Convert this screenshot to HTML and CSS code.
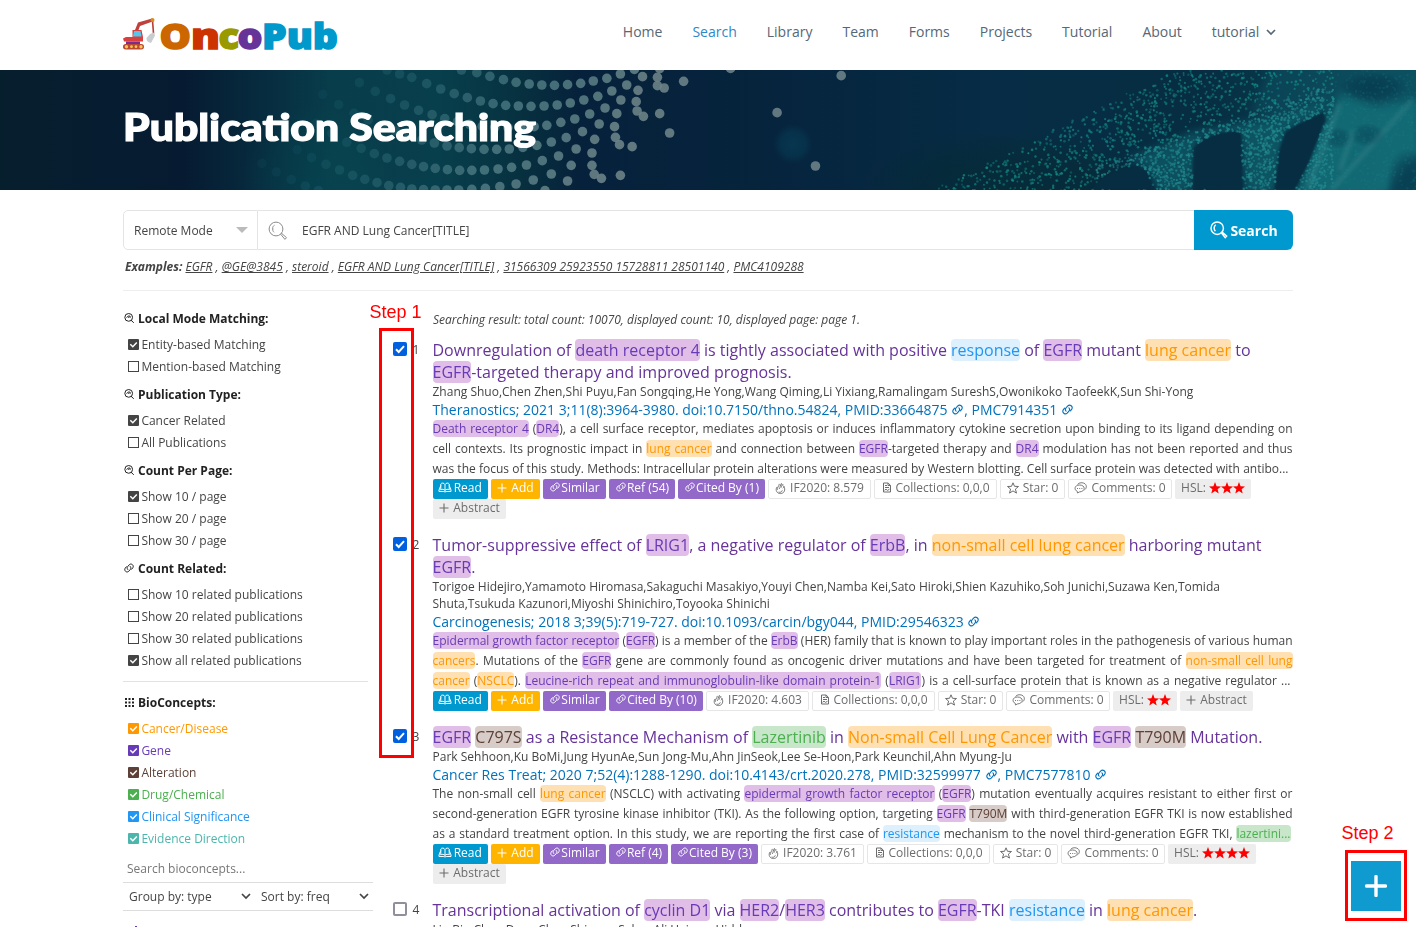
FILE: index.html
```
<!DOCTYPE html>
<html lang="en">
<head>
<meta charset="utf-8">
<title>OncoPub - Publication Searching</title>
<link rel="stylesheet" href="styles.css">
</head>
<body>
<svg class="defs" width="0" height="0">
  <symbol id="i-search" viewBox="0 0 16 16"><g fill="none" stroke="currentColor" stroke-width="1.600"><circle cx="7.500" cy="7" r="6.200"/><path d="M11.500 11.800l3.700 3.400M4.500 7c1-3 5.500-3 6-.3q-2-1-3.500 0" stroke-linecap="round"/></g></symbol>
  <symbol id="i-link" viewBox="0 0 16 16"><g fill="none" stroke="currentColor" stroke-width="1.600" stroke-linecap="round"><path d="M6 10.500c-2-2-1-4 .5-5.500l2-2.300c3-3 8 1 5.700 4.800l-2 2.500"/><path d="M10 5.500c2 2 1 4-.5 5.500l-2 2.300c-3 3-8-1-5.700-4.800l2-2.500"/></g></symbol>
  <symbol id="i-on" viewBox="0 0 11 11"><rect width="11" height="11" rx="1" fill="currentColor"/><path d="M2.300 5.200l2.500 2.500 4-4.200" fill="none" stroke="#fff" stroke-width="1.500"/></symbol>
  <symbol id="i-off" viewBox="0 0 11 11"><rect x=".5" y=".5" width="10" height="10" fill="none" stroke="currentColor"/></symbol>
  <symbol id="i-grid" viewBox="0 0 9 9"><path fill="currentColor" d="M0 0h2v2H0zM3.500 0h2v2h-2zM7 0h2v2H7zM0 3.500h2v2H0zM3.500 3.500h2v2h-2zM7 3.500h2v2H7zM0 7h2v2H0zM3.500 7h2v2h-2zM7 7h2v2H7z"/></symbol>
  <symbol id="i-book" viewBox="0 0 14 12"><path fill="none" stroke="currentColor" stroke-width="1" d="M7 8.500V2.500C6 .7 3.500.7 2.800 2v6C3.800 7 6 7 7 8.500zM7 2.500C8 .7 10.500.7 11.200 2v6C10.200 7 8 7 7 8.500M2.800 3.500L1 8v1.500h4.800q1.200 1 2.400 0H13V8l-1.800-4.500"/></symbol>
  <symbol id="i-plus" viewBox="0 0 10 10"><path d="M5 .5v9M.5 5h9" fill="none" stroke="currentColor" stroke-width="1.100"/></symbol>
  <symbol id="i-fire" viewBox="0 0 12 14"><path fill="none" stroke="currentColor" d="M2 5.500C.2 9 2 12.500 6 12.500s5.800-4 3.700-8c0 1-.4 2-1.200 2.300M2.500 8.500C2 6 4.500 4.500 4.700 2M4.500 7.500C6 6 5.500 3 7 1.500c1 1 .2 3-.2 4.500M8.500 4c.2-.8.200-1.200 0-1.800M4 10.800c1.500 1 3.500 0 4-1.800"/></symbol>
  <symbol id="i-file" viewBox="0 0 10 11"><path fill="none" stroke="currentColor" d="M1.500 1h4.700l2.300 2.500v6.500h-7zM6 1V3.500h2.500M3 3.500h2M3 5.500h4M2.500 8.300L4 7.200l1.500 1.200L7.500 7.200"/></symbol>
  <symbol id="i-star" viewBox="0 0 12 12"><path fill="none" stroke="currentColor" d="M6 .8l1.500 3.500 4 .2-3.100 2.600 1.100 4L6 8.900l-3.500 2.200 1.100-4L.5 4.500l4-.2z"/></symbol>
  <symbol id="i-redstar" viewBox="0 0 12 12"><path fill="red" d="M6 0l1.600 4.200 4.400.2-3.400 2.800 1.100 4.300L6 9.100l-3.700 2.400 1.100-4.300L0 4.400l4.400-.2z"/></symbol>
  <symbol id="i-comment" viewBox="0 0 13 12"><path fill="none" stroke="currentColor" stroke-width=".9" d="M3.500 2.500C5 .3 9 .2 11 1.800c2 1.700 1.700 4.700-.5 6M5.500 3c2.800 0 4.700 1.400 4.700 3.400S8 9.900 5.500 9.900L3.500 11l-.2-1.600C0 8 0 3.200 5.500 3zM3 6.500h1M5.200 6.500h1M7.400 6.500h1"/></symbol>
  <symbol id="i-chev" viewBox="0 0 10 7"><path d="M1 1l4 4 4-4" fill="none" stroke="currentColor" stroke-width="1.700"/></symbol>
  <symbol id="i-lens" viewBox="0 0 20 20"><g fill="none" stroke="currentColor"><circle cx="8" cy="8" r="6.900"/><path d="M6.500 4.200C4 5.500 4 9.500 6 11.300M4.500 8h1M12.800 13.300l.9-.9 4.800 4.300-1.600 1.700z"/></g></symbol>
</svg>

<header class="top wrap">
  <svg class="logo" width="216" height="36" viewBox="0 0 216 36" aria-label="OncoPub">
    <path d="M12 13L15 5.500 29 1.500 31 4 17 9 15.500 13z" fill="#c0403c"/>
    <path d="M29.500 3.500l1 13" stroke="#b93b36" stroke-width="1.600"/>
    <circle cx="29.500" cy="3" r="2" fill="#d98a20"/>
    <path d="M27 17l4-1.500 1 3-4 7.500q-5-1-4.500-5z" fill="#c8cdd0"/>
    <path d="M0 21.500L3 20h6.500v-7h9l1.500 7v4.500H1z" fill="#d83f3f"/>
    <path d="M11 14h6.500l1 5.500H10z" fill="#57c6ea"/>
    <path d="M3 24.500h14v3H3z" fill="#7a2d8c"/>
    <rect x="0" y="27" width="21" height="5.500" rx="2.700" fill="#bb4830"/>
    <g fill="#f6c653"><circle cx="3.500" cy="29.700" r="1.700"/><circle cx="8.500" cy="29.700" r="1.400"/><circle cx="13" cy="29.700" r="1.400"/><circle cx="18" cy="29.700" r="1.700"/></g>
    <g class="word">
      <text x="36.500" y="31.500" textLength="31.500" lengthAdjust="spacingAndGlyphs" fill="#c60" stroke="#c60">O</text>
      <text x="68" y="31.500" textLength="29" lengthAdjust="spacingAndGlyphs" fill="#c30" stroke="#c30">n</text>
      <text x="95.500" y="31.500" textLength="20.500" lengthAdjust="spacingAndGlyphs" fill="#990" stroke="#990">c</text>
      <text x="114.500" y="31.500" textLength="25" lengthAdjust="spacingAndGlyphs" fill="#639" stroke="#639">o</text>
      <text x="139" y="31.500" textLength="76" lengthAdjust="spacingAndGlyphs" fill="#09c" stroke="#09c">Pub</text>
    </g>
  </svg>
  <nav class="nav"><a>Home</a><a class="on">Search</a><a>Library</a><a>Team</a><a>Forms</a><a>Projects</a><a>Tutorial</a><a>About</a><a>tutorial <svg width="10" height="7"><use href="#i-chev"/></svg></a></nav>
</header>

<section class="banner">
  <canvas id="art" width="1416" height="120"></canvas>
  <div class="wrap"><h1><svg width="414" height="60"><text x="0" y="43" textLength="413" lengthAdjust="spacingAndGlyphs">Publication Searching</text></svg></h1></div>
</section>

<main class="wrap">
  <form class="bar">
    <span class="mode">Remote Mode<i class="tri"></i></span>
    <span class="query"><svg width="20" height="20"><use href="#i-lens"/></svg>EGFR AND Lung Cancer[TITLE]</span>
    <span class="go"><svg width="18" height="18"><use href="#i-lens"/></svg>Search</span>
  </form>
  <p class="examples"><b>Examples:</b> <u>EGFR</u> , <u>@GE@3845</u> , <u>steroid</u> , <u>EGFR AND Lung Cancer[TITLE]</u> , <u>31566309 25923550 15728811 28501140</u> , <u>PMC4109288</u></p>

  <div class="cols">
    <aside class="side">
      <h4><svg width="10" height="10"><use href="#i-search"/></svg>Local Mode Matching:</h4>
      <label><svg><use href="#i-on"/></svg>Entity-based Matching</label>
      <label><svg><use href="#i-off"/></svg>Mention-based Matching</label>
      <h4><svg width="10" height="10"><use href="#i-search"/></svg>Publication Type:</h4>
      <label><svg><use href="#i-on"/></svg>Cancer Related</label>
      <label><svg><use href="#i-off"/></svg>All Publications</label>
      <h4><svg width="10" height="10"><use href="#i-search"/></svg>Count Per Page:</h4>
      <label><svg><use href="#i-on"/></svg>Show 10 / page</label>
      <label><svg><use href="#i-off"/></svg>Show 20 / page</label>
      <label><svg><use href="#i-off"/></svg>Show 30 / page</label>
      <h4><svg width="10" height="10"><use href="#i-link"/></svg>Count Related:</h4>
      <label><svg><use href="#i-off"/></svg>Show 10 related publications</label>
      <label><svg><use href="#i-off"/></svg>Show 20 related publications</label>
      <label><svg><use href="#i-off"/></svg>Show 30 related publications</label>
      <label><svg><use href="#i-on"/></svg>Show all related publications</label>
      <hr>
      <h4><svg width="9" height="9"><use href="#i-grid"/></svg>BioConcepts:</h4>
      <label class="dis"><svg><use href="#i-on"/></svg>Cancer/Disease</label>
      <label class="gen"><svg><use href="#i-on"/></svg>Gene</label>
      <label class="alt"><svg><use href="#i-on"/></svg>Alteration</label>
      <label class="drg"><svg><use href="#i-on"/></svg>Drug/Chemical</label>
      <label class="cli"><svg><use href="#i-on"/></svg>Clinical Significance</label>
      <label class="evi"><svg><use href="#i-on"/></svg>Evidence Direction</label>
      <div class="find">Search bioconcepts...</div>
      <div class="selects"><span>Group by: type<svg width="10" height="7"><use href="#i-chev"/></svg></span><span>Sort by: freq<svg width="10" height="7"><use href="#i-chev"/></svg></span></div>
      <div class="tag"><i></i></div>
    </aside>

    <section class="results">
      <p class="summary">Searching result: total count: 10070, displayed count: 10, displayed page: page 1.</p>

      <article>
        <div class="pick"><i class="cb checked"><svg width="14" height="14" viewBox="0 0 14 14"><path d="M3 7.300l2.700 2.700L11 4.200"/></svg></i><span>1</span></div>
        <div class="pub">
          <h3>Downregulation of <mark class="gen">death receptor 4</mark> is tightly associated with positive <mark class="cli">response</mark> of <mark class="gen">EGFR</mark> mutant <mark class="dis">lung cancer</mark> to<br><mark class="gen">EGFR</mark>-targeted therapy and improved prognosis.</h3>
          <p class="authors">Zhang Shuo,Chen Zhen,Shi Puyu,Fan Songqing,He Yong,Wang Qiming,Li Yixiang,Ramalingam SureshS,Owonikoko TaofeekK,Sun Shi-Yong</p>
          <p class="journal">Theranostics; 2021 3;11(8):3964-3980. doi:10.7150/thno.54824, PMID:33664875 <svg><use href="#i-link"/></svg>, PMC7914351 <svg><use href="#i-link"/></svg></p>
          <div class="abs">
            <p><mark class="gen">Death receptor 4</mark> (<mark class="gen">DR4</mark>), a cell surface receptor, mediates apoptosis or induces inflammatory cytokine secretion upon binding to its ligand depending on</p>
            <p>cell contexts. Its prognostic impact in <mark class="dis">lung cancer</mark> and connection between <mark class="gen">EGFR</mark>-targeted therapy and <mark class="gen">DR4</mark> modulation has not been reported and thus</p>
            <p class="cut3">was the focus of this study. Methods: Intracellular protein alterations were measured by Western blotting. Cell surface protein was detected with antibo...</p>
          </div>
          <div class="acts">
            <span class="b read"><svg width="14" height="12"><use href="#i-book"/></svg>Read</span><span class="b add"><svg width="10" height="10"><use href="#i-plus"/></svg>Add</span><span class="b rel w63"><svg width="10" height="10"><use href="#i-link"/></svg>Similar</span><span class="b rel w66"><svg width="10" height="10"><use href="#i-link"/></svg>Ref (54)</span><span class="b rel w87"><svg width="10" height="10"><use href="#i-link"/></svg>Cited By (1)</span><span class="b out w103"><svg width="11" height="13"><use href="#i-fire"/></svg>IF2020: 8.579</span><span class="b out w123"><svg width="10" height="11"><use href="#i-file"/></svg>Collections: 0,0,0</span><span class="b out w65"><svg width="12" height="12"><use href="#i-star"/></svg>Star: 0</span><span class="b out w104"><svg width="13" height="12"><use href="#i-comment"/></svg>Comments: 0</span><span class="b grey w76">HSL: <span class="stars"><svg><use href="#i-redstar"/></svg><svg><use href="#i-redstar"/></svg><svg><use href="#i-redstar"/></svg></span></span><span class="b grey w73"><svg width="10" height="10"><use href="#i-plus"/></svg>Abstract</span>
          </div>
        </div>
      </article>

      <article>
        <div class="pick"><i class="cb checked"><svg width="14" height="14" viewBox="0 0 14 14"><path d="M3 7.300l2.700 2.700L11 4.200"/></svg></i><span>2</span></div>
        <div class="pub">
          <h3>Tumor-suppressive effect of <mark class="gen">LRIG1</mark>, a negative regulator of <mark class="gen">ErbB</mark>, in <mark class="dis">non-small cell lung cancer</mark> harboring mutant<br><mark class="gen">EGFR</mark>.</h3>
          <p class="authors">Torigoe Hidejiro,Yamamoto Hiromasa,Sakaguchi Masakiyo,Youyi Chen,Namba Kei,Sato Hiroki,Shien Kazuhiko,Soh Junichi,Suzawa Ken,Tomida<br>Shuta,Tsukuda Kazunori,Miyoshi Shinichiro,Toyooka Shinichi</p>
          <p class="journal">Carcinogenesis; 2018 3;39(5):719-727. doi:10.1093/carcin/bgy044, PMID:29546323 <svg><use href="#i-link"/></svg></p>
          <div class="abs">
            <p><mark class="gen">Epidermal growth factor receptor</mark> (<mark class="gen">EGFR</mark>) is a member of the <mark class="gen">ErbB</mark> (HER) family that is known to play important roles in the pathogenesis of various human</p>
            <p><mark class="dis">cancers</mark>. Mutations of the <mark class="gen">EGFR</mark> gene are commonly found as oncogenic driver mutations and have been targeted for treatment of <mark class="dis">non-small cell lung</mark></p>
            <p class="cut2"><mark class="dis">cancer</mark> (<mark class="dis">NSCLC</mark>). <mark class="gen">Leucine-rich repeat and immunoglobulin-like domain protein-1</mark> (<mark class="gen">LRIG1</mark>) is a cell-surface protein that is known as a negative regulator ...</p>
          </div>
          <div class="acts">
            <span class="b read"><svg width="14" height="12"><use href="#i-book"/></svg>Read</span><span class="b add"><svg width="10" height="10"><use href="#i-plus"/></svg>Add</span><span class="b rel w63"><svg width="10" height="10"><use href="#i-link"/></svg>Similar</span><span class="b rel w94"><svg width="10" height="10"><use href="#i-link"/></svg>Cited By (10)</span><span class="b out w103"><svg width="11" height="13"><use href="#i-fire"/></svg>IF2020: 4.603</span><span class="b out w123"><svg width="10" height="11"><use href="#i-file"/></svg>Collections: 0,0,0</span><span class="b out w65"><svg width="12" height="12"><use href="#i-star"/></svg>Star: 0</span><span class="b out w104"><svg width="13" height="12"><use href="#i-comment"/></svg>Comments: 0</span><span class="b grey w64">HSL: <span class="stars"><svg><use href="#i-redstar"/></svg><svg><use href="#i-redstar"/></svg></span></span><span class="b grey w73"><svg width="10" height="10"><use href="#i-plus"/></svg>Abstract</span>
          </div>
        </div>
      </article>

      <article>
        <div class="pick"><i class="cb checked"><svg width="14" height="14" viewBox="0 0 14 14"><path d="M3 7.300l2.700 2.700L11 4.200"/></svg></i><span>3</span></div>
        <div class="pub">
          <h3><mark class="gen">EGFR</mark> <mark class="alt">C797S</mark> as a Resistance Mechanism of <mark class="drg">Lazertinib</mark> in <mark class="dis">Non-small Cell Lung Cancer</mark> with <mark class="gen">EGFR</mark> <mark class="alt">T790M</mark> Mutation.</h3>
          <p class="authors">Park Sehhoon,Ku BoMi,Jung HyunAe,Sun Jong-Mu,Ahn JinSeok,Lee Se-Hoon,Park Keunchil,Ahn Myung-Ju</p>
          <p class="journal">Cancer Res Treat; 2020 7;52(4):1288-1290. doi:10.4143/crt.2020.278, PMID:32599977 <svg><use href="#i-link"/></svg>, PMC7577810 <svg><use href="#i-link"/></svg></p>
          <div class="abs">
            <p>The non-small cell <mark class="dis">lung cancer</mark> (NSCLC) with activating <mark class="gen">epidermal growth factor receptor</mark> (<mark class="gen">EGFR</mark>) mutation eventually acquires resistant to either first or</p>
            <p>second-generation EGFR tyrosine kinase inhibitor (TKI). As the following option, targeting <mark class="gen">EGFR</mark> <mark class="alt">T790M</mark> with third-generation EGFR TKI is now established</p>
            <p class="cut2">as a standard treatment option. In this study, we are reporting the first case of <mark class="cli">resistance</mark> mechanism to the novel third-generation EGFR TKI, <mark class="drg">lazertini...</mark></p>
          </div>
          <div class="acts">
            <span class="b read"><svg width="14" height="12"><use href="#i-book"/></svg>Read</span><span class="b add"><svg width="10" height="10"><use href="#i-plus"/></svg>Add</span><span class="b rel w63"><svg width="10" height="10"><use href="#i-link"/></svg>Similar</span><span class="b rel w59"><svg width="10" height="10"><use href="#i-link"/></svg>Ref (4)</span><span class="b rel w87"><svg width="10" height="10"><use href="#i-link"/></svg>Cited By (3)</span><span class="b out w103"><svg width="11" height="13"><use href="#i-fire"/></svg>IF2020: 3.761</span><span class="b out w123"><svg width="10" height="11"><use href="#i-file"/></svg>Collections: 0,0,0</span><span class="b out w65"><svg width="12" height="12"><use href="#i-star"/></svg>Star: 0</span><span class="b out w104"><svg width="13" height="12"><use href="#i-comment"/></svg>Comments: 0</span><span class="b grey w88">HSL: <span class="stars"><svg><use href="#i-redstar"/></svg><svg><use href="#i-redstar"/></svg><svg><use href="#i-redstar"/></svg><svg><use href="#i-redstar"/></svg></span></span><span class="b grey w73"><svg width="10" height="10"><use href="#i-plus"/></svg>Abstract</span>
          </div>
        </div>
      </article>

      <article>
        <div class="pick"><i class="cb"></i><span>4</span></div>
        <div class="pub">
          <h3>Transcriptional activation of <mark class="gen">cyclin D1</mark> via <mark class="gen">HER2</mark>/<mark class="gen">HER3</mark> contributes to <mark class="gen">EGFR</mark>-TKI <mark class="cli">resistance</mark> in <mark class="dis">lung cancer</mark>.</h3>
          <p class="authors">Liu Bin,Chen Deng,Chen Shipeng,Saber Ali,Haisma Hidde</p>
        </div>
      </article>
    </section>
  </div>
</main>

<div class="step-box picks"></div>
<div class="step-label one">Step 1</div>
<div class="step-label two">Step 2</div>
<div class="step-box fab-box"></div>
<div class="fab"><svg width="22" height="22" viewBox="0 0 22 22"><path d="M11 1.500v19M1.500 11h19" stroke="#fff" stroke-width="3.400" stroke-linecap="round"/></svg></div>
<script src="banner.js"></script>
</body>
</html>
```

FILE: styles.css
```
* { box-sizing: border-box; }
body { margin: 0; height: 927px; overflow: hidden; position: relative; background: #fff; color: #444; font: 12px/17px "Open Sans", sans-serif; }
h1, h3, h4, p { margin: 0; font-weight: 400; }
.defs { position: absolute; }
.wrap { width: 1170px; margin: 0 auto; }

.top { height: 70px; display: flex; justify-content: space-between; align-items: flex-start; padding: 17px 17px 0 0; }
.logo { display: block; overflow: visible; }
.word { font: 900 36px "Open Sans", sans-serif; stroke-width: 1.4; }
.nav { display: flex; gap: 30px; font-size: 14px; line-height: 30px; color: #556877; }
.nav .on { color: #2f87c9; }
.nav svg { margin: 0 0 1px 3px; }

.banner { height: 120px; background: #06203a; display: grid; }
.banner > * { grid-area: 1 / 1; }
.banner canvas { display: block; }
.banner h1 { position: relative; padding-top: 28px; }
.banner h1 svg { display: block; overflow: visible; font: 900 38px Lato, sans-serif; fill: #fff; stroke: #fff; stroke-width: 1.2; }

.bar { display: flex; height: 40px; margin-top: 20px; line-height: 38px; }
.mode { width: 135px; border: 1px solid #e4e4e4; border-radius: 5px 0 0 5px; padding: 2px 9px 0 10px; display: flex; justify-content: space-between; align-items: center; }
.tri { border: 6px solid transparent; border-top-color: #bbb; border-bottom: 0; margin-bottom: 2px; }
.query { flex: 1; border: solid #e4e4e4; border-width: 1px 0; padding: 2px 0 0 10px; display: flex; align-items: center; gap: 14px; }
.query svg { color: #8a8a8a; margin-bottom: 1px; }
.go { width: 99px; background: #0099cf; color: #fff; border-radius: 0 6px 6px 0; font-weight: 700; font-size: 14px; display: flex; align-items: center; justify-content: center; gap: 2px; padding: 2px 0 0 1px; }
.go svg { margin-bottom: 2px; stroke-width: 1.6; }
.examples { font-style: italic; padding: 8px 0 15px 2px; height: 41px; border-bottom: 1px solid #eee; white-space: nowrap; }

.cols { display: flex; gap: 24.5px; padding-top: 10px; }
.side { width: 245px; flex: none; }
.side h4 { height: 32px; line-height: 36px; font-weight: 700; color: #222; display: flex; gap: 4px; }
.side h4 svg { margin: 12px 0 0 1px; }
.side h4 svg[width="9"] { margin: 13px 0 0 2px; }
.side label { display: flex; align-items: center; gap: 2.4px; height: 22px; padding-left: 5px; }
.side label svg { width: 11px; height: 11px; }
.side hr { border: 0; border-top: 1px solid #e2e2e2; margin: 10px 0 3px; }
.find { width: 250px; height: 34px; line-height: 39px; padding: 0 0 0 4px; border-bottom: 1px solid #ddd; color: #777; }
.selects { width: 250px; display: flex; height: 28px; border-bottom: 1px solid #ddd; align-items: center; padding: 0 4px 0 6px; gap: 10px; }
.selects span { display: flex; align-items: center; justify-content: space-between; width: 122px; }
.selects span + span { width: 108px; }
.tag { padding: 15px 0 0 12px; }
.tag i { display: block; width: 2px; height: 3px; background: #673ab7; }

.gen { color: #673ab7; }
.dis { color: #ff9800; }
.alt { color: #5d4037; }
.drg { color: #4caf50; }
.cli { color: #2196f3; }
.evi { color: #4db6ac; }
mark { border-radius: 4px; }
mark.gen { background: #e1bee7; }
mark.dis { background: #ffe0b2; }
mark.alt { background: #d7ccc8; }
mark.drg { background: #c8e6c9; }
mark.cli { background: #dcf0fd; }

.results { width: 900.500px; }
.summary { font-style: italic; padding: 10px 0 11px 40.500px; height: 38px; white-space: nowrap; }
article { display: flex; margin-bottom: 15px; }
.pick { width: 40px; flex: none; display: flex; gap: 5.500px; line-height: 22px; }
.cb { width: 14px; height: 14px; margin: 3px 0 0 .5px; border: 2px solid #8f8f9d; border-radius: 2px; }
.checked { border: 0; background: #0060df; }
.cb svg { display: block; fill: none; stroke: #fff; stroke-width: 2; }
.pub { width: 860px; white-space: nowrap; }
.pub h3 { font-size: 16px; line-height: 22px; color: #663399; }
.journal { font-size: 14px; line-height: 19px; height: 19px; color: #0072bc; }
.journal svg { width: 11px; height: 11px; margin: 0 1px; }
.abs p { line-height: 20px; height: 20px; text-align: justify; text-align-last: justify; }
.abs .cut3 { width: 856px; }
.abs .cut2 { width: 858px; }
.acts { display: flex; flex-wrap: wrap; gap: 0 3px; margin-left: .5px; }
.b { height: 20px; line-height: 18px; border-radius: 2px; display: flex; justify-content: center; gap: 3px; color: #fff; }
.b > svg { margin-top: 3px; }
.read { width: 55px; background: #0099cf; gap: 1.500px; padding-right: 1px; }
.add { width: 49px; background: #ffb400; gap: 4px; }
.add > svg, .w73 > svg { margin-top: 4px; }
.rel { background: #9268c8; gap: 1px; padding-left: 1px; }
.out { border: 1px solid #e6e6e6; color: #6c6c6c; line-height: 16px; gap: 4px; }
.out > svg { margin-top: 2px; }
.grey { background: #ededed; color: #6c6c6c; gap: 3px; }
.grey.w73 { gap: 4px; }
.stars { display: flex; padding-top: 3px; }
.stars svg { width: 12px; height: 12px; }
.w59 { width: 59px; } .w63 { width: 63px; } .w64 { width: 64px; } .w65 { width: 65px; } .w66 { width: 66px; } .w73 { width: 73px; } .w76 { width: 76px; } .w87 { width: 87px; } .w88 { width: 88px; } .w94 { width: 94px; } .w103 { width: 103px; } .w104 { width: 104px; } .w123 { width: 123px; }

.step-box, .step-label, .fab { position: absolute; }
.step-box { border: 3px solid red; }
.picks { left: 378.500px; top: 327.500px; width: 35px; height: 430px; }
.fab-box { left: 1344.500px; top: 849.500px; width: 62px; height: 71px; }
.step-label { font: 18px/20px "Liberation Sans", sans-serif; color: red; }
.one { left: 369.500px; top: 302px; }
.two { left: 1341.500px; top: 823px; }
.fab { left: 1351px; top: 861px; width: 50px; height: 50px; background: #0f9bd0; display: flex; align-items: center; justify-content: center; }
```

FILE: banner.js
```
// Banner artwork: dotted waves on the left, particle helix on the right.
const c = document.getElementById('art').getContext('2d');
function ellipseGlow(x, y, rx, ry, rgb, a) {
  c.save(); c.translate(x, y); c.scale(rx, ry);
  const g = c.createRadialGradient(0, 0, 0, 0, 0, 1);
  g.addColorStop(0, `rgba(${rgb},${a})`); g.addColorStop(.6, `rgba(${rgb},${a * .7})`); g.addColorStop(1, `rgba(${rgb},0)`);
  c.fillStyle = g; c.fillRect(-1, -1, 2, 2); c.restore();
}
const bg = c.createLinearGradient(0, 0, 1416, 0);
[[0, '#061f2d'], [.06, '#061d30'], [.13, '#061b31'], [.19, '#072d40'], [.235, '#083e4b'], [.31, '#083f4c'],
 [.37, '#07303f'], [.41, '#06213b'], [.55, '#06243d'], [.72, '#072d46'], [.85, '#072d42'], [1, '#0b4a5b']]
  .forEach(s => bg.addColorStop(s[0], s[1]));
c.fillStyle = bg; c.fillRect(0, 0, 1416, 120);
ellipseGlow(315, 110, 75, 75, '5,80,88', .3);
ellipseGlow(1010, 120, 150, 60, '5,42,48', .6);
ellipseGlow(793, 74, 20, 20, '8,66,92', .6);

const SX = 708 / 1568, SY = 1 / 3;
const rows = [
  [1022,0,1056,8,1085,19,1115,29,1143,37,1172,42,1200,45,1228,46,1257,44,1286,40,1314,33,1344,25,1374,12,1405,-2],
  [857,0,885,12,912,22,945,41,976,57,1006,71,1035,83,1064,93,1092,101,1120,106,1148,108,1176,109,1205,108,1234,105,1263,99,1293,90,1324,79,1355,63,1388,45,1423,20,1461,-4],
  [796,38,831,64,865,86,896,105,927,121,957,134,985,146,1013,155,1040,163,1068,169,1096,172,1125,173,1154,172,1183,170,1211,166,1242,157,1273,147,1306,132,1340,114,1375,90,1413,61,1456,22,1456,47,1471,54,1514,34],
  [715,73,750,104,784,130,815,150,847,168,877,183,906,197,934,210,962,219,990,228,1017,233,1044,236,1072,238,1100,238,1128,237,1158,232,1189,226,1221,216,1254,203,1290,185,1327,162,1366,131,1409,95,1411,123,1425,139,1461,131],
  [700,160,735,190,768,217,800,235,829,251,857,264,885,274,912,283,938,290,964,295,991,299,1018,301,1045,301,1073,300,1103,297,1133,292,1166,285,1201,272,1237,258,1276,237,1317,208,1361,170,1363,202,1372,224,1400,230,1483,189],
  [658,239,690,263,722,283,752,300,781,316,808,328,835,338,861,347,887,352,912,357,938,359,964,360,990,360,1016,360,1045,358,1075,355,1107,350,1143,342,1181,330,1221,312,1265,286,1311,249,1311,286,1316,313,1332,325,1374,316],
  [580,280,612,306,645,329,676,348,705,362,1207,362,1257,333],
  [1618,-5,1863,17,1721,128,1806,288]
];
rows.forEach((r, k) => {
  for (let i = 0; i < r.length; i += 2) {
    const t = Math.max(0, Math.min(1, (r[i] - 780 + k * 28) / 700));
    const red = Math.round(25 + 82 * t), grn = Math.round(98 + 32 * t), blu = Math.round(113 + 22 * t);
    c.fillStyle = `rgba(${red},${grn},${blu},${Math.min(.9, .14 + t * 1.4)})`;
    c.beginPath(); c.arc(r[i] * SX, r[i + 1] * SY, 4.8, 0, 7); c.fill();
  }
});

let seed = 41;
const rnd = () => (seed = (seed * 16807) % 2147483647) / 2147483647;
function poly(pts) {
  const p = new Path2D();
  pts.forEach((q, i) => p[i ? 'lineTo' : 'moveTo'](708 + q[0] * SX, q[1] * SY));
  p.closePath(); return p;
}
// Soft haze behind the rungs and the right end of the helix.
c.save(); c.filter = 'blur(4px)';
c.fillStyle = 'rgba(20,115,124,.8)';
c.fill(poly([[1400,70],[1480,105],[1580,85],[1580,250],[1540,290],[1500,380],[1300,380],[1345,200],[1380,120]]));
c.fillStyle = 'rgba(18,115,124,.5)';
c.fill(poly([[930,265],[990,235],[1075,185],[1180,160],[1260,140],[1380,90],[1360,125],[1280,180],[1255,370],[1190,370],[1180,190],[1085,205],[1070,370],[1000,370],[970,290]]));
c.fillStyle = 'rgba(18,100,114,.3)';
c.fill(poly([[1250,-20],[1580,-20],[1580,100],[1400,90],[1260,140],[1200,130]]));
c.restore();
const voids = [
  poly([[850,360],[875,320],[910,297],[950,290],[972,305],[990,360]]),
  poly([[1075,360],[1075,235],[1095,210],[1130,190],[1165,183],[1181,190],[1184,360]]),
  poly([[1255,360],[1265,240],[1280,185],[1325,150],[1363,127],[1368,150],[1330,280],[1300,360]])
];
c.save(); c.filter = 'blur(1px)'; c.fillStyle = '#072d42'; voids.forEach(v => c.fill(v)); c.restore();
ellipseGlow(708 + 1475 * SX, 17, 34, 15, '6,58,78', .8);
ellipseGlow(708 + 1395 * SX, 68, 15, 11, '8,70,90', .6);
ellipseGlow(708 + 1460 * SX, 65, 18, 12, '8,70,90', .6);
ellipseGlow(708 + 1550 * SX, 112, 22, 34, '8,60,80', .7);
c.save(); c.filter = 'blur(2px)'; c.strokeStyle = 'rgba(105,165,165,.25)'; c.lineWidth = 4;
[[1560,90,1380,360],[1430,180,1400,300],[1400,100,1330,350]].forEach(l => {
  c.beginPath(); c.moveTo(708 + l[0] * SX, l[1] * SY); c.lineTo(708 + l[2] * SX, l[3] * SY); c.stroke();
});
c.restore();
for (let i = 0; i < 6500; i++) {
  const x = 480 + rnd() * 1088, y = rnd() * 362, px = 708 + x * SX, py = y * SY;
  const above = x - (1040 - y * 1.49);
  if (above < -10 + rnd() * 20) continue;
  const lower = x > 860 && y > 290 - (x - 860) * .48;
  if (!lower && rnd() > .42) continue;
  if (x > 1385 && rnd() > .35) continue;
  if (voids.some(v => c.isPointInPath(v, px, py))) continue;
  const a = x > 1385 ? .16 : .4 + rnd() * .4;
  c.fillStyle = lower ? `rgba(34,138,142,${a})` : `rgba(18,138,132,${a})`;
  c.beginPath(); c.arc(px, py, .9 + rnd() * .5, 0, 7); c.fill();
}
```
